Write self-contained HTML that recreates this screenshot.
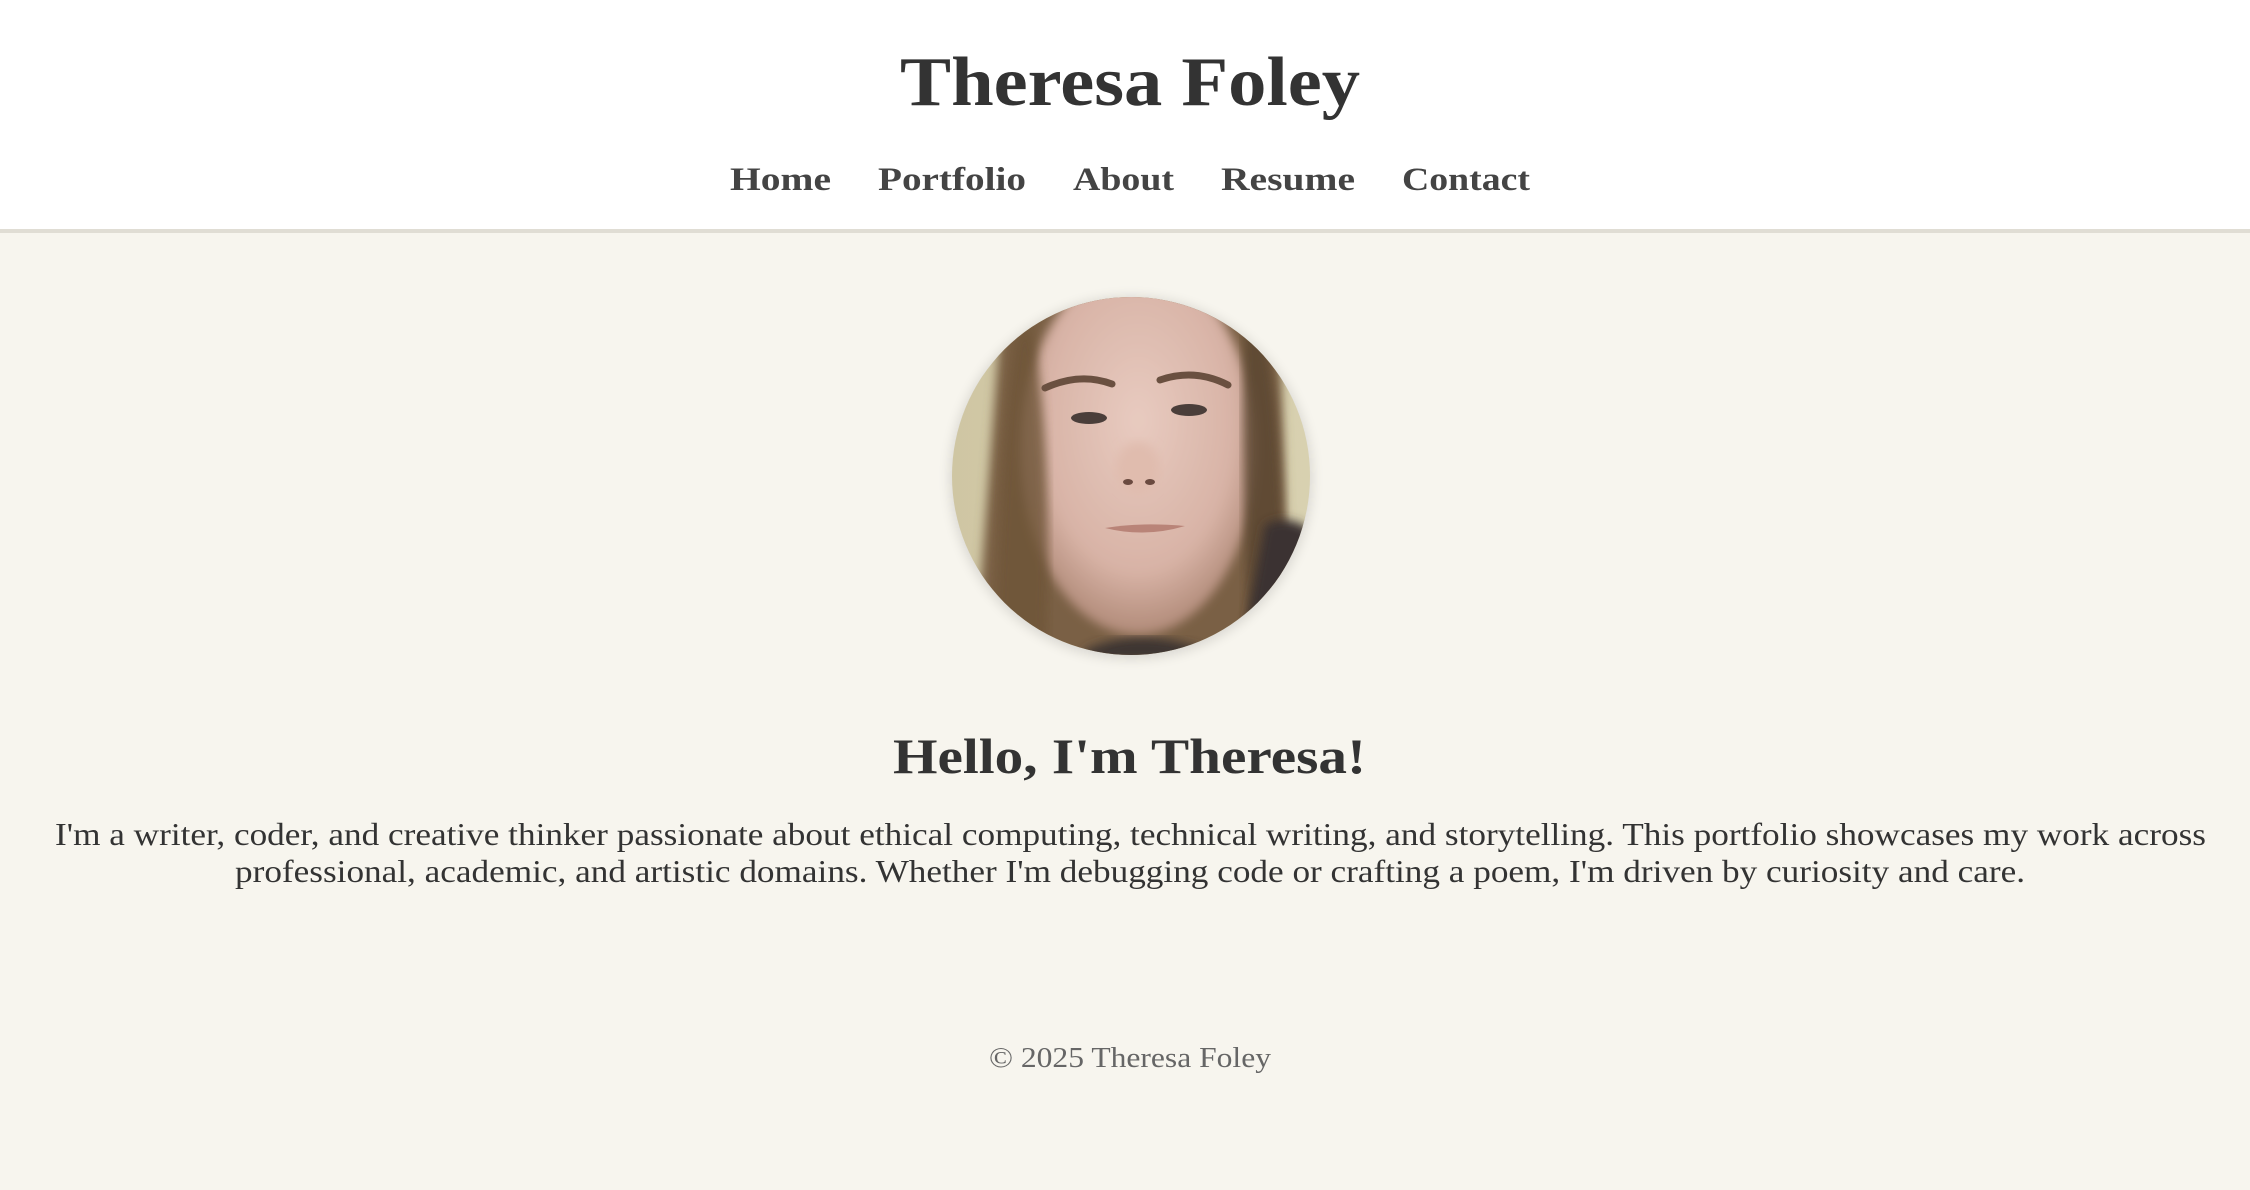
<!DOCTYPE html>
<html><head><meta charset="utf-8"><style>
html,body{margin:0;padding:0;width:2250px;height:1190px;overflow:hidden;background:#f7f5ee}
svg{display:block}
</style></head><body>
<svg width="2250" height="1190" viewBox="0 0 2250 1190" xmlns="http://www.w3.org/2000/svg">
<defs>
<clipPath id="c"><circle cx="1131" cy="476" r="179"/></clipPath>
<radialGradient id="sk" cx="0.5" cy="0.42" r="0.58"><stop offset="0" stop-color="#e8cbc0"/><stop offset="0.7" stop-color="#d8b3a6"/><stop offset="1" stop-color="#b08a78"/></radialGradient>
<linearGradient id="bg" x1="0" y1="0" x2="1" y2="0"><stop offset="0" stop-color="#cfc6a3"/><stop offset="1" stop-color="#d8d1b0"/></linearGradient>
<filter id="bl"><feGaussianBlur stdDeviation="5"/></filter>
<filter id="sh"><feGaussianBlur stdDeviation="6"/></filter>
</defs>
<rect x="0" y="0" width="2250" height="229" fill="#ffffff"/>
<rect x="0" y="229" width="2250" height="4" fill="#e0ddd4"/>
<g font-family="Liberation Serif, serif" font-weight="bold" fill="#333">
<text x="900" y="105" font-size="70" textLength="460" lengthAdjust="spacingAndGlyphs">Theresa Foley</text>
<g font-size="33" fill="#444">
<text x="730" y="190" textLength="101" lengthAdjust="spacingAndGlyphs">Home</text>
<text x="878" y="190" textLength="148" lengthAdjust="spacingAndGlyphs">Portfolio</text>
<text x="1073" y="190" textLength="101" lengthAdjust="spacingAndGlyphs">About</text>
<text x="1221" y="190" textLength="134" lengthAdjust="spacingAndGlyphs">Resume</text>
<text x="1402" y="190" textLength="128" lengthAdjust="spacingAndGlyphs">Contact</text>
</g>
<text x="893" y="773" font-size="50" textLength="473" lengthAdjust="spacingAndGlyphs">Hello, I'm Theresa!</text>
</g>
<circle cx="1131" cy="478" r="181" fill="#000" opacity="0.12" filter="url(#sh)"/>
<g clip-path="url(#c)">
<rect x="950" y="295" width="362" height="362" fill="url(#bg)"/>
<path d="M1000 330 Q1040 290 1131 295 Q1230 290 1280 340 L1290 660 L975 660 Z" fill="#7a6045" filter="url(#bl)"/>
<ellipse cx="1138" cy="450" rx="118" ry="185" fill="url(#sk)" filter="url(#bl)"/>
<path d="M1030 320 Q1055 440 1045 660 L995 660 Q1000 450 1015 340 Z" fill="#6e5538" opacity="0.8" filter="url(#bl)"/>
<path d="M1245 320 Q1240 450 1250 660 L1285 660 Q1285 420 1265 340 Z" fill="#5c4630" opacity="0.85" filter="url(#bl)"/>
<path d="M1265 525 Q1295 510 1320 540 L1320 660 L1240 660 Z" fill="#3a3330" filter="url(#bl)"/>
<path d="M1085 650 Q1140 625 1205 650 L1205 660 L1085 660 Z" fill="#3e3632" filter="url(#bl)"/>
<path d="M1045 388 Q1080 372 1112 384" stroke="#6a5040" stroke-width="7" fill="none" stroke-linecap="round"/>
<path d="M1160 380 Q1195 368 1228 385" stroke="#6a5040" stroke-width="7" fill="none" stroke-linecap="round"/>
<ellipse cx="1089" cy="418" rx="18" ry="6" fill="#4a3e3a"/>
<ellipse cx="1189" cy="410" rx="18" ry="6" fill="#4a3e3a"/>
<ellipse cx="1138" cy="468" rx="22" ry="26" fill="#e0bcae" filter="url(#bl)"/>
<ellipse cx="1128" cy="482" rx="5" ry="3" fill="#6a4a40"/>
<ellipse cx="1150" cy="482" rx="5" ry="3" fill="#6a4a40"/>
<path d="M1105 528 Q1140 522 1185 526 Q1145 538 1105 528" fill="#b98478"/>
</g>
<g font-family="Liberation Serif, serif" fill="#333" font-size="32">
<text x="55" y="845" textLength="2151" lengthAdjust="spacingAndGlyphs">I'm a writer, coder, and creative thinker passionate about ethical computing, technical writing, and storytelling. This portfolio showcases my work across</text>
<text x="235" y="882" textLength="1790" lengthAdjust="spacingAndGlyphs">professional, academic, and artistic domains. Whether I'm debugging code or crafting a poem, I'm driven by curiosity and care.</text>
<text x="989" y="1067" font-size="28" fill="#666" textLength="282" lengthAdjust="spacingAndGlyphs">© 2025 Theresa Foley</text>
</g>
</svg>
</body></html>
